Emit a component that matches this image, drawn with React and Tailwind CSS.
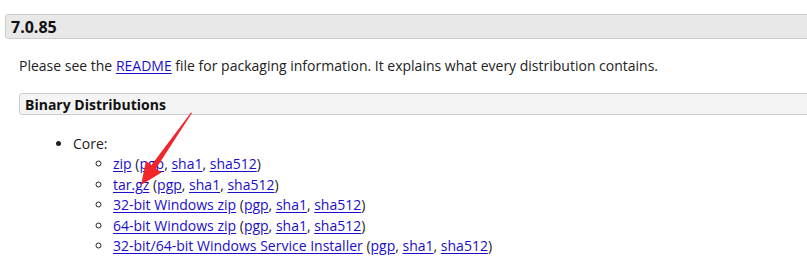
export default function App() {
  const link = "text-[#1a0dcc] underline underline-offset-[2px]";
  const items = [
    { name: "zip" },
    { name: "tar.gz" },
    { name: "32-bit Windows zip" },
    { name: "64-bit Windows zip" },
    { name: "32-bit/64-bit Windows Service Installer" },
  ];

  return (
    <div
      className="relative w-[807px] h-[257px] overflow-hidden bg-white text-[#222222] text-[14px]"
      style={{ fontFamily: '"Open Sans", "Noto Sans", sans-serif' }}
    >
      <div className="w-[840px] pt-[14px] pl-[5px]">
        {/* version header */}
        <div className="h-[25px] rounded-[3px] border border-[#cccccc] bg-[#e8e8e8] pl-[5px] flex items-center">
          <h3 className="text-[16px] font-bold leading-none text-[#111]">7.0.85</h3>
        </div>

        <div className="pl-[14px]">
          <p className="mt-[17px] leading-[20px]">
            Please see the <a className={link}>README</a> file for packaging information. It explains what every
            distribution contains.
          </p>

          {/* section header */}
          <div className="mt-[17px] h-[22px] rounded-[3px] border border-[#cccccc] bg-[#f4f4f4] pl-[5px] pt-px flex items-center">
            <h4 className="text-[14px] font-bold leading-none text-[#111]">Binary Distributions</h4>
          </div>

          <ul className="mt-[19px] pl-[54px] list-disc leading-[20.4px]">
            <li>
              Core:
              <ul className="pl-[40px] list-[circle]">
                {items.map((it) => (
                  <li key={it.name}>
                    <a className={link}>{it.name}</a> (<a className={link}>pgp</a>,{" "}
                    <a className={link}>sha1</a>, <a className={link}>sha512</a>)
                  </li>
                ))}
              </ul>
            </li>
          </ul>
        </div>
      </div>

      {/* red annotation arrow */}
      <svg className="absolute left-0 top-0 pointer-events-none" width="807" height="257">
        <polygon
          points="192,113 156,168.5 161.5,172.5 141,185 146,161 151.5,165 191,112.5"
          fill="#f0262a"
        />
      </svg>
    </div>
  );
}
